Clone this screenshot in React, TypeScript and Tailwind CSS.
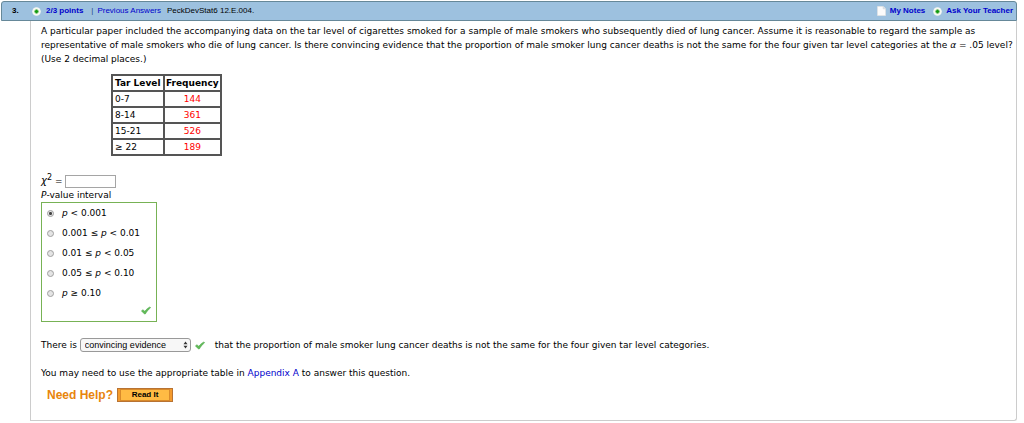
import React, { useState } from 'react';

const TAR_LEVELS = [
    { level: '0-7', frequency: 144 },
    { level: '8-14', frequency: 361 },
    { level: '15-21', frequency: 526 },
    { level: '≥ 22', frequency: 189 }
];

const P_INTERVALS = [
    { id: 'lt-001', before: '', after: ' < 0.001' },
    { id: '001-01', before: '0.001 ≤ ', after: ' < 0.01' },
    { id: '01-05', before: '0.01 ≤ ', after: ' < 0.05' },
    { id: '05-10', before: '0.05 ≤ ', after: ' < 0.10' },
    { id: 'ge-10', before: '', after: ' ≥ 0.10' }
];

const PlusBadge: React.FC = () => (
    <svg viewBox="0 0 9 9" className="size-[9px] shrink-0" aria-hidden="true">
        <circle cx="4.5" cy="4.5" r="4.3" fill="#f6f8f2" />
        <path d="M4.5 2.5v4M2.5 4.5h4" stroke="#149a10" strokeWidth="2" />
    </svg>
);

const NoteIcon: React.FC = () => (
    <svg viewBox="0 0 9 10" className="h-[10px] w-[9px] shrink-0" aria-hidden="true">
        <path d="M.3.3h5.9L8.7 2.8v6.9H.3z" fill="#fbfbfb" stroke="#d5d5d5" strokeWidth="0.5" />
        <path d="M6.2.3v2.5h2.5" fill="#dfe5ea" stroke="#c4cbd1" strokeWidth="0.5" />
    </svg>
);

const CorrectMark: React.FC = () => (
    <svg viewBox="0 0 10 9" className="h-[9px] w-[10px] shrink-0" role="img" aria-label="Correct">
        <path
            d="M.4 5 1.9 3.700 3.800 5.300C5.200 3.400 7 1.800 9 .9l.6.800C7.700 3.300 6 5.200 4.400 7.900H3.500z"
            fill="#62bb58"
            stroke="#4aa548"
            strokeWidth="0.5"
            strokeLinejoin="round"
        />
    </svg>
);

const App: React.FC = () => {
    const [interval, setInterval] = useState('lt-001');
    const [chiSquare, setChiSquare] = useState('');

    return (
        <main className="bg-white pt-px pr-[7px] pl-px font-['DejaVu_Sans',Verdana,sans-serif] text-[9px] leading-[14px] text-black">
            {/* Question header */}
            <header className="flex h-5 items-center justify-between rounded-t-[3px] border border-[#668899] bg-[#9dc1df] pr-[3px] pl-2.5 font-['Liberation_Sans',Arial,sans-serif] text-[8px]">
                <div className="flex items-center">
                    <span className="w-5 font-bold">3.</span>
                    <PlusBadge />
                    <a href="#points" className="ml-[5px] font-bold text-[#0000cc]">2/3 points</a>
                    <span className="mr-1 ml-2 text-[#224488]">|</span>
                    <a href="#previous" className="text-[#0000cc]">Previous Answers</a>
                    <span className="ml-1.5">PeckDevStat6 12.E.004.</span>
                </div>
                <nav className="flex items-center font-bold text-[#0000cc]">
                    <NoteIcon />
                    <a href="#notes" className="mr-2 ml-1">My Notes</a>
                    <PlusBadge />
                    <a href="#ask" className="ml-1">Ask Your Teacher</a>
                </nav>
            </header>

            {/* Question body */}
            <section className="ml-[29px] rounded-br-[3px] border border-t-0 border-[#cccccc] pt-[3px] pb-[18px] pl-2.5">
                <p className="lg:whitespace-nowrap">
                    A particular paper included the accompanying data on the tar level of cigarettes smoked for a sample of male smokers who subsequently died of lung cancer. Assume it is reasonable to regard the sample as
                    <br />
                    representative of male smokers who die of lung cancer. Is there convincing evidence that the proportion of male smoker lung cancer deaths is not the same for the four given tar level categories at the{' '}
                    <i>α</i> = .05 level?
                    <br />
                    (Use 2 decimal places.)
                </p>

                <table className="mt-2 ml-[70px] border-collapse border-2 border-[#555555]">
                    <thead>
                        <tr className="h-4">
                            <th className="w-[52px] border-2 border-[#555555] px-0.5 text-left whitespace-nowrap">Tar Level</th>
                            <th className="w-[56px] border-2 border-[#555555] px-px whitespace-nowrap">Frequency</th>
                        </tr>
                    </thead>
                    <tbody>
                        {TAR_LEVELS.map((row) => (
                            <tr key={row.level} className="h-4">
                                <td className="border-2 border-[#555555] px-0.5">{row.level}</td>
                                <td className="border-2 border-[#555555] px-px text-center text-[#ff0000]">{row.frequency}</td>
                            </tr>
                        ))}
                    </tbody>
                </table>

                <div className="mt-[18px] flex h-3.5 items-center gap-[3px]">
                    <label htmlFor="chi-square" className="whitespace-nowrap">
                        <i className="text-[10px]">χ</i>
                        <sup className="text-[8px]">2</sup> =
                    </label>
                    <input
                        id="chi-square"
                        type="text"
                        value={chiSquare}
                        onChange={(e) => setChiSquare(e.target.value)}
                        className="h-[13px] w-[51px] border border-[#a5a5a5] bg-white px-0.5"
                    />
                </div>

                <fieldset>
                    <legend><i>P</i>-value interval</legend>
                    <div className="flex w-[116px] flex-col border border-[#77b255] px-[5px] pb-1.5">
                        {P_INTERVALS.map((option) => (
                            <label key={option.id} className="flex h-5 items-center gap-2">
                                <input
                                    type="radio"
                                    name="p-interval"
                                    checked={interval === option.id}
                                    onChange={() => setInterval(option.id)}
                                    className="size-[7px] appearance-none rounded-full border border-[#a0a0a0] bg-[#e4e4e4] checked:bg-[radial-gradient(circle,#444444_35%,#e4e4e4_50%)]"
                                />
                                <span>{option.before}<i>p</i>{option.after}</span>
                            </label>
                        ))}
                        <div className="mt-[3px] flex justify-end">
                            <CorrectMark />
                        </div>
                    </div>
                </fieldset>

                <div className="mt-4 flex items-center">
                    <label htmlFor="evidence">There is</label>
                    <div className="relative ml-[3px]">
                        <select
                            id="evidence"
                            className="block h-3.5 w-[111px] appearance-none rounded-[3px] border border-[#999999] bg-[#f7f7f7] pl-1 font-['Liberation_Sans',Arial,sans-serif] text-[9px] leading-3"
                        >
                            <option>convincing evidence</option>
                            <option>not convincing evidence</option>
                        </select>
                        <svg viewBox="0 0 5 8" className="pointer-events-none absolute top-[3px] right-[3px] h-2 w-[5px]" aria-hidden="true">
                            <path d="M2.5.4 4.5 3.2H.5zM2.5 7.6.5 4.8h4z" fill="#333333" />
                        </svg>
                    </div>
                    <span className="mr-2.5 ml-1"><CorrectMark /></span>
                    <span>that the proportion of male smoker lung cancer deaths is not the same for the four given tar level categories.</span>
                </div>

                <p className="mt-3.5">
                    You may need to use the appropriate table in <a href="#appendix-a" className="text-[#0000cc]">Appendix A</a> to answer this question.
                </p>

                <div className="mt-2 flex items-center gap-1 pl-1.5 font-['Liberation_Sans',Arial,sans-serif] font-bold">
                    <span className="text-xs leading-[14px] text-[#e8850c]">Need Help?</span>
                    <button
                        type="button"
                        className="h-3.5 w-14 border border-[#b87333] bg-[#f49a2c] px-0.5 text-[8px] leading-[10px]"
                    >
                        <span className="block border border-[#d98a2b] bg-[#ffbb44]">Read It</span>
                    </button>
                </div>
            </section>
        </main>
    );
};

export default App;
